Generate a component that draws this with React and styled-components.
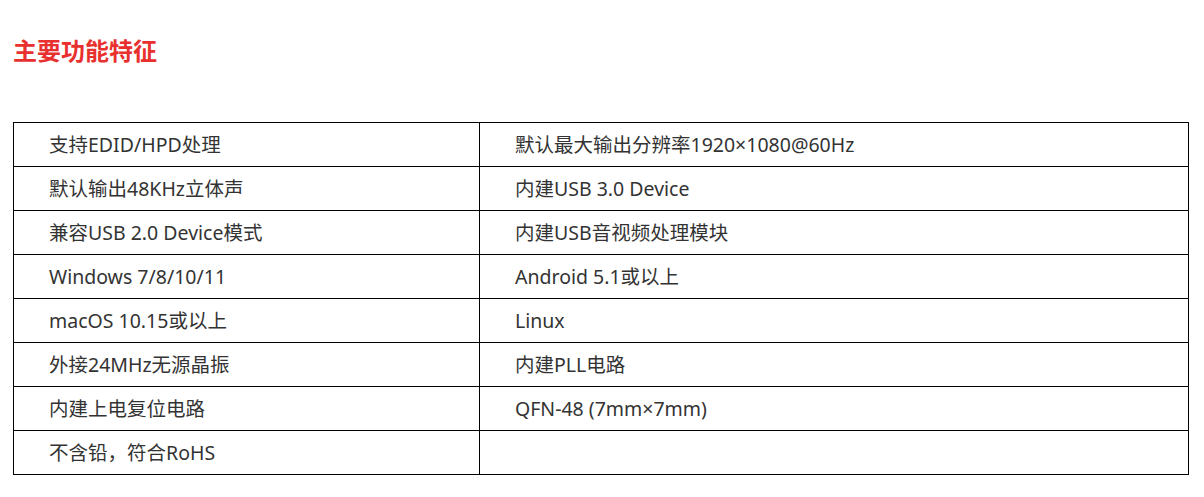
import React from "react";
import styled, { createGlobalStyle } from "styled-components";

const GlobalStyle = createGlobalStyle`
  html, body {
    margin: 0;
    padding: 0;
    background: #fff;
  }
  body {
    font-family: "Noto Sans", "Noto Sans CJK SC", sans-serif;
    color: #333;
  }
`;

const Section = styled.section`
  padding: 33px 16px 0 13px;
`;

const Title = styled.h2`
  margin: 0;
  font-family: "Noto Sans CJK SC", sans-serif;
  font-size: 24px;
  line-height: 34px;
  font-weight: 700;
  color: #e8312f;
`;

const Table = styled.table`
  margin-top: 55px;
  width: 1176px;
  border-collapse: collapse;
  table-layout: fixed;
  font-size: 19.5px;
  color: #333;
`;

const Cell = styled.td`
  height: 43px;
  padding: 0 0 0 35px;
  border: 1px solid #000;
  vertical-align: middle;
  line-height: 24px;
  white-space: nowrap;
  width: ${(props) => props.$w || "auto"};
`;

const rows = [
  ["支持EDID/HPD处理", "默认最大输出分辨率1920×1080@60Hz"],
  ["默认输出48KHz立体声", "内建USB 3.0 Device"],
  ["兼容USB 2.0 Device模式", "内建USB音视频处理模块"],
  ["Windows 7/8/10/11", "Android 5.1或以上"],
  ["macOS 10.15或以上", "Linux"],
  ["外接24MHz无源晶振", "内建PLL电路"],
  ["内建上电复位电路", "QFN-48 (7mm×7mm)"],
  ["不含铅，符合RoHS", ""],
];

export default function App() {
  return (
    <>
      <GlobalStyle />
      <Section>
        <Title>主要功能特征</Title>
        <Table>
          <tbody>
            {rows.map(([left, right], i) => (
              <tr key={i}>
                <Cell $w="430px">{left}</Cell>
                <Cell>{right}</Cell>
              </tr>
            ))}
          </tbody>
        </Table>
      </Section>
    </>
  );
}
